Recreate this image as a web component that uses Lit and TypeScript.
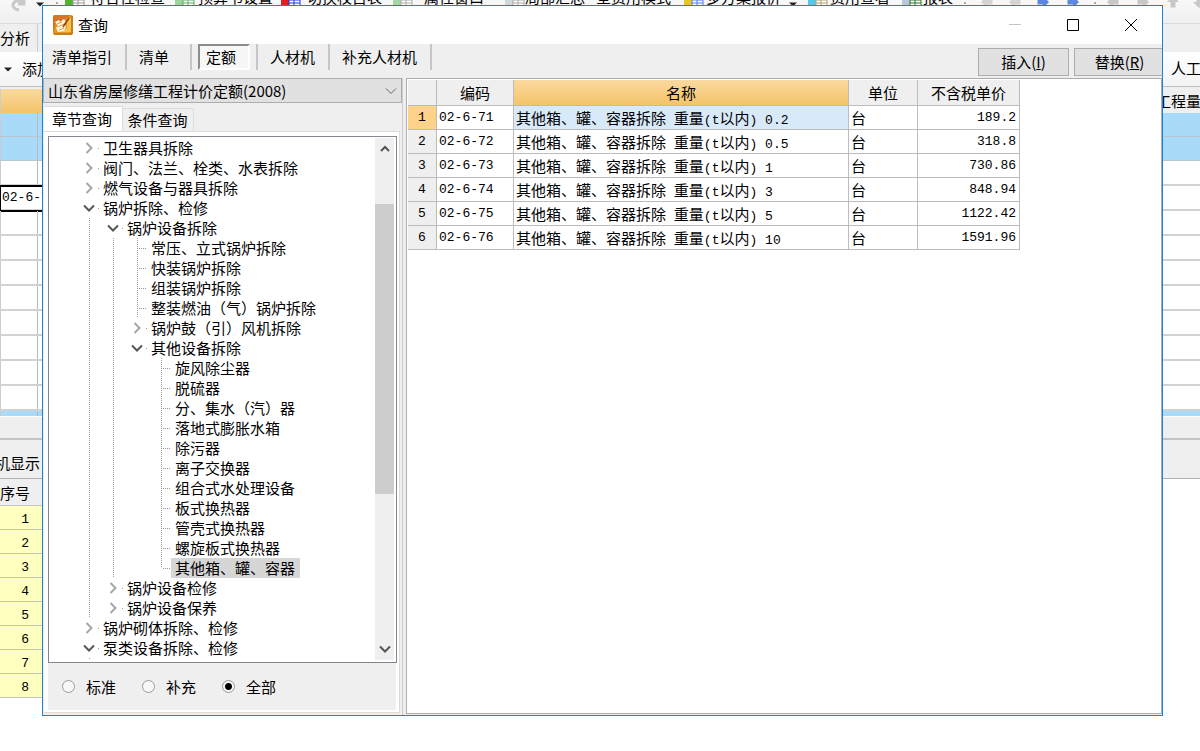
import { LitElement, html, css, svg } from "lit";
import { customElement, state } from "lit/decorators.js";
import { classMap } from "lit/directives/class-map.js";

type Kind = "open" | "closed" | "leaf" | "last";
interface Node { guides: string; kind: Kind; text: string }

const n = (guides: string, kind: Kind, text: string): Node => ({ guides, kind, text });

// Each character of `guides` is one indent step: "|" draws a connector, "." leaves it blank.
const NODES: Node[] = [
  n("", "closed", "卫生器具拆除"),
  n("", "closed", "阀门、法兰、栓类、水表拆除"),
  n("", "closed", "燃气设备与器具拆除"),
  n("", "open", "锅炉拆除、检修"),
  n("|", "open", "锅炉设备拆除"),
  n("||", "leaf", "常压、立式锅炉拆除"),
  n("||", "leaf", "快装锅炉拆除"),
  n("||", "leaf", "组装锅炉拆除"),
  n("||", "leaf", "整装燃油（气）锅炉拆除"),
  n("||", "closed", "锅炉鼓（引）风机拆除"),
  n("||", "open", "其他设备拆除"),
  n("||.", "leaf", "旋风除尘器"),
  n("||.", "leaf", "脱硫器"),
  n("||.", "leaf", "分、集水（汽）器"),
  n("||.", "leaf", "落地式膨胀水箱"),
  n("||.", "leaf", "除污器"),
  n("||.", "leaf", "离子交换器"),
  n("||.", "leaf", "组合式水处理设备"),
  n("||.", "leaf", "板式换热器"),
  n("||.", "leaf", "管壳式换热器"),
  n("||.", "leaf", "螺旋板式换热器"),
  n("||.", "last", "其他箱、罐、容器"),
  n("|", "closed", "锅炉设备检修"),
  n("|", "closed", "锅炉设备保养"),
  n("", "closed", "锅炉砌体拆除、检修"),
  n("", "open", "泵类设备拆除、检修"),
  n("|", "closed", "泵本设备拆除"),
];

const ROWS = [
  ["02-6-71", "0.2", "189.2"],
  ["02-6-72", "0.5", "318.8"],
  ["02-6-73", "1", "730.86"],
  ["02-6-74", "3", "848.94"],
  ["02-6-75", "5", "1122.42"],
  ["02-6-76", "10", "1591.96"],
];

const chevron = (dir: "right" | "down" | "up") => {
  const d = { right: "M3.5 1L8.5 6L3.5 11", down: "M1 3.5L6 8.5L11 3.5", up: "M2 8L6 4L10 8" }[dir];
  return html`<svg class="chev chev-${dir}" width="12" height="12" viewBox="0 0 12 12"><path d=${d} /></svg>`;
};

const caret = html`<svg width="8" height="5" viewBox="0 0 8 5"><path d="M0 0.5h8L4 4.5z" fill="#222" /></svg>`;

const arrow = (turn: number, color: string) => html`<svg class="tool" width="14" height="12" viewBox="0 0 14 12">
  <path transform="rotate(${turn} 7 6)" d="M7 0L13 6H9.5V11.5H4.5V6H1z" fill=${color} /></svg>`;

const sheet = (a: string, b: string) => html`<svg class="tool" width="20" height="12" viewBox="0 0 20 12">
  ${svg`<path d="M0 0h8v11H0z" fill=${a} /><path d="M8 .5h11v10H8zM8 4h11M8 7h11M13 0v10" fill="#fff" stroke=${b} />`}</svg>`;

@customElement("app-root")
export class AppRoot extends LitElement {
  @state() private selectedNode = 21;
  @state() private selectedRow = 0;

  static styles = css`
    :host {
      display: block;
      position: relative;
      height: 100vh;
      overflow: hidden;
      background: #fff;
      color: #000;
      font: 15px/20px "Noto Sans CJK SC", sans-serif;
    }
    * { box-sizing: border-box; }
    button, select, input { font: inherit; color: inherit; margin: 0; }
    button { border: 0; padding: 0; background: none; white-space: nowrap; }
    .mono { font-family: "Liberation Mono", "Noto Sans CJK SC", monospace; font-size: 13px; }

    /* Main window behind the dialog */
    .back { display: flex; flex-direction: column; white-space: nowrap; }
    .toolbar {
      display: grid;
      grid-template-columns:
        36px 20px 9px 25px 85px 23px 83px 26px 86px 31px 81px 20px 71px 88px 22px 83px
        19px 22px 72px 21px 41px 16px 28px 28px 30px 28px 12px 30px 30px 26px 1fr;
      height: 24px;
      overflow: hidden;
      background: linear-gradient(#f8f8f8, #efefef);
      border-bottom: 1px solid #dcdcdc;
    }
    .toolbar > * { margin-top: -13px; }
    .toolbar > svg { margin-top: 2px; }
    .toolbar > svg.tool { margin-top: -4px; }
    .toolbar > svg.undo { margin: 0 0 0 10px; }
    .dots { border-left: 2px dotted #aaa; height: 20px; }
    .band { display: flex; justify-content: space-between; overflow: hidden; }
    .left { width: 42px; flex: none; overflow: hidden; }
    .right { width: 44px; flex: none; overflow: hidden; }
    .tabs-back { height: 28px; background: #efefef; line-height: 28px; }
    .tabs-back .left { width: 38px; border-right: 1px solid #ccc; }
    .bar { height: 34px; line-height: 32px; background: linear-gradient(#fff, #f3f3f3); }
    .bar .left { display: flex; align-items: center; gap: 10px; padding-left: 4px; }
    .bar .left svg { flex: none; }
    .bar .right { width: 29px; }
    .heads { height: 27px; padding-top: 2px; line-height: 24px; background: #efefef; border-top: 1px solid #c0c0c0; }
    .heads .left { background: linear-gradient(#fad9a0, #f4c468); border-left: 1px solid #ccc; }
    .line { height: 25px; border-bottom: 2px solid #d2d2d2; }
    .line .left { border-left: 1px solid #ccc; }
    .line .left::after { content: ""; display: block; height: 100%; width: 36px; border-right: 1px solid #bbb; }
    .line.blue { height: 24px; background: #a8dafa; border-bottom: 1px solid #b9c6ce; }
    .line.thin { height: 5px; border: 0; }
    .line.active { overflow: visible; }
    .line.active .left { height: 27px; margin-top: -1px; border: solid #000; border-width: 2px 0 2px 1px; padding-left: 1px; line-height: 22px; }
    .line.active .left::after { content: none; }
    .scroll-back { height: 24px; background: #efefef; border-top: 1px solid #fff; border-bottom: 2px solid #c4c4c4; }
    .title-back { height: 39px; background: #efefef; border-bottom: 1px solid #b0b0b8; line-height: 46px; }
    .title-back .left { display: flex; justify-content: flex-end; padding-right: 2px; }
    .num { width: 42px; height: 24px; padding-right: 13px; background: #ffffc0; border-bottom: 1px solid #c4c4c4; text-align: right; line-height: 27px; }
    .num.head { height: 27px; background: #efefef; }

    /* Dialog */
    .dialog {
      position: absolute;
      inset: 5px 37px 35px 42px;
      display: flex;
      flex-direction: column;
      overflow: hidden;
      border: 1px solid #1883d7;
      background: #efefef;
    }
    .title { display: flex; align-items: center; gap: 5px; height: 38px; flex: none; padding-left: 10px; background: #fff; }
    .title h1 { flex: 1; margin: 0; font-size: 15px; font-weight: 400; line-height: 20px; }
    .sys { display: flex; gap: 12px; padding-right: 8px; }
    .sys button { display: grid; place-items: center; width: 46px; height: 36px; }
    .tabs { display: flex; height: 34px; flex: none; padding-left: 2px; }
    .tab { height: 26px; padding: 0 13px 0 12px; border-right: 2px solid #c6c6c6; }
    .tab.first { padding-left: 7px; }
    .tab.wide { padding-right: 21px; }
    .tab.on { width: 52px; margin: 0 6px; padding: 0 0 0 6px; border: 2px solid; border-color: #8c8c8c #fff #fff #8c8c8c; background: #f7f7f7; text-align: left; line-height: 22px; }
    .rule { width: 2px; height: 26px; background: #c6c6c6; }
    .actions { display: flex; gap: 5px; margin-left: auto; margin-right: -3px; padding-top: 4px; }
    .actions button { width: 91px; height: 28px; border: 1px solid #adadad; background: #e1e1e1; }

    .main { display: flex; flex: 1; min-height: 0; }
    .side { display: flex; flex-direction: column; width: 360px; flex: none; border-right: 1px solid #ccc; }
    .pick { position: relative; flex: none; width: 359px; height: 25px; }
    .pick select { appearance: none; width: 100%; height: 100%; padding: 0 24px 0 4px; border: 1px solid #adadad; border-radius: 0; background: #e1e1e1; line-height: 20px; }
    .sub { display: flex; align-items: flex-end; flex: none; height: 28px; padding-left: 1px; }
    .sub button { height: 23px; padding: 0 5px 0 4px; border: 1px solid #dcdcdc; border-width: 1px 1px 0 0; width: 71px; }
    .sub button.on { width: 79px; height: 25px; padding: 0 10px 0 8px; background: #fff; line-height: 22px; }
    .page { display: flex; flex-direction: column; flex: 1; min-height: 0; margin: 0 2px 2px 1px; padding: 4px 2px 2px 4px; background: #fff; border: 1px solid #dcdcdc; border-width: 1px 1px 1px 0; }
    .treebox { display: flex; flex: 1; min-height: 0; border: 1px solid #828790; padding: 1px 2px 2px 0; background: #fff; }
    .tree { flex: 1; margin: 0; padding: 0 0 0 26px; overflow: hidden; list-style: none; }
    .tree li { display: flex; height: 20px; white-space: nowrap; }
    .step { width: 24px; flex: none; }
    .step.v { background: repeating-linear-gradient(#999 0 1px, transparent 1px 2px) 14px 0 / 1px 100% no-repeat; }
    .leaf, .last { background:
        repeating-linear-gradient(#999 0 1px, transparent 1px 2px) 14px 0 / 1px 100% no-repeat,
        repeating-linear-gradient(90deg, #999 0 1px, transparent 1px 2px) 16px 10px / 8px 1px no-repeat; }
    .last { background-size: 1px 10px, 8px 1px; }
    .node { display: grid; place-items: center start; padding-left: 8px; background: linear-gradient(#999, #999) 23px 10px / 1px 1px no-repeat; }
    .label { padding: 0 5px 0 4px; line-height: 19px; height: 20px; }
    .label.on { background: #d6d6d6; }
    .chev { fill: none; stroke: #555; stroke-width: 2; }
    .chev-right { stroke: #a6a6a6; }
    .pick .chev { position: absolute; right: 5px; top: 7px; pointer-events: none; stroke: #666; stroke-width: 1; }
    .scroll { display: grid; grid-template-rows: 66fr 291fr 166fr; width: 19px; flex: none; justify-items: center; background: #efefef; }
    .scroll .chev { margin: 5px 0; }
    .scroll .chev:last-child { align-self: end; }
    .thumb { width: 100%; background: #cdcdcd; }
    .radios { display: flex; align-items: center; height: 47px; flex: none; margin-right: 1px; padding: 0 14px; background: #efefef; }
    .radios label { display: flex; align-items: center; gap: 11px; width: 80px; }
    .radios input { appearance: none; width: 13px; height: 13px; border: 1px solid #999; border-radius: 50%; background: #f8f8f8; }
    .radios input:checked { background: radial-gradient(circle, #000 0 3px, #f8f8f8 4px); }

    .data { flex: 1; min-width: 0; margin: 0 0 1px 3px; padding: 1px 0 0 1px; border: 1px solid #a9adb5; background: #fff; }
    table { width: 612px; table-layout: fixed; border-collapse: separate; border-spacing: 0; }
    th, td { height: 24px; padding: 0 2px; border: 0 solid #bcbcbc; border-width: 0 1px 1px 0; font-weight: 400; line-height: 20px; overflow: hidden; white-space: nowrap; text-align: left; }
    td .mono { line-height: 1; }
    thead th { height: 26px; background: #efefef; text-align: center; }
    thead .hot { background: linear-gradient(#fad9a0, #f4c468); }
    tbody th { background: #efefef; text-align: center; }
    tbody .on th { background: #ffd28a; }
    tbody .on .name { background: #d8eaf9; }
    td.price { padding-right: 3px; text-align: right; }
    .c-num { width: 29px; } .c-code { width: 77px; } .c-unit { width: 69px; } .c-price { width: 102px; }
  `;

  private backWindow() {
    return html`<div class="back">
      <div class="toolbar">
        <svg class="undo" width="17" height="12" viewBox="0 0 17 12"><path d="M9 10C-1 9 2-3 14 2M14-2V4H8" fill="none" stroke="#c8c8c8" stroke-width="3" /></svg>
        ${caret}<i class="dots"></i>
        ${sheet("#4fb52c", "#999")}<span>符合性检查</span>
        ${sheet("#9ad69a", "#5fae5f")}<span>预算书设置</span>
        ${sheet("#e02020", "#1838d8")}<span>切换校目表</span>
        ${sheet("#a5d8a0", "#aaa")}<span>属性窗口</span>
        ${sheet("#d0d8dc", "#aaa")}<span>局部汇总</span><span>全费用模式</span>
        ${sheet("#e8c820", "#4a80e0")}<span>多方案报价</span>${caret}
        ${sheet("#52c8ec", "#b0a070")}<span>费用查看</span>
        ${sheet("#b8c8d8", "#287828")}<span>报表</span><i class="dots"></i>
        ${arrow(-90, "#d4d4d4")}${arrow(-90, "#d4d4d4")}${arrow(90, "#5a88e0")}${arrow(90, "#5a88e0")}<i class="dots"></i>
        ${arrow(-90, "#c8c8c8")}${arrow(90, "#c8c8c8")}${arrow(0, "#c8c8c8")}${arrow(180, "#c8c8c8")}
      </div>
      <div class="band tabs-back"><div class="left">分析</div></div>
      <div class="band bar"><div class="left">${caret}<span>添加</span></div><div class="right">人工</div></div>
      <div class="band heads"><div class="left"></div><div class="right">工程量表达式</div></div>
      <div class="band line blue"><div class="left"></div></div>
      <div class="band line blue"><div class="left"></div></div>
      <div class="band line"><div class="left"></div></div>
      <div class="band line active"><div class="left mono">02-6-76</div></div>
      ${Array.from({ length: 8 }, () => html`<div class="band line"><div class="left"></div></div>`)}
      <div class="band line blue thin"><div class="left"></div></div>
      <div class="scroll-back"></div>
      <div class="band title-back"><div class="left">工料机显示</div></div>
      <div class="num head">序号</div>
      ${[1, 2, 3, 4, 5, 6, 7, 8].map((i) => html`<div class="num mono">${i}</div>`)}
    </div>`;
  }

  private treeRow(node: Node, i: number) {
    const branch = node.kind === "open" || node.kind === "closed";
    return html`<li role="treeitem" aria-selected=${i === this.selectedNode}>
      ${[...node.guides].map((g) => html`<span class="step ${g === "|" ? "v" : ""}"></span>`)}
      <span class="step ${branch ? "node" : node.kind}">${branch ? chevron(node.kind === "open" ? "down" : "right") : ""}</span>
      <span class=${classMap({ label: true, on: i === this.selectedNode })} @click=${() => (this.selectedNode = i)}>${node.text}</span>
    </li>`;
  }

  render() {
    return html`
      ${this.backWindow()}
      <section class="dialog" role="dialog" aria-label="查询">
        <header class="title">
          <svg width="20" height="20" viewBox="0 0 20 20">
            <rect width="20" height="20" rx="2" fill="#e09a20" />
            <path d="M0 2Q0 0 2 0H18L13 4L3 8L0 18z" fill="#d8742a" />
            <path d="M14 3h4v14H6l8-4z" fill="#f7c24c" />
            <path d="M2 7L6 5L7 7L11 4L13 7L11 9L13 11L11 16L5 17L3 13L5 11z" fill="#fff6dc" />
            <path d="M4 9l5-2M5 12l6-3M6 15l5-2" stroke="#d59a58" />
            <path d="M16 3L10 12" stroke="#9a3c10" stroke-width="1.5" />
            <path d="M1 19H19V1" fill="none" stroke="#b5640c" />
          </svg>
          <h1>查询</h1>
          <div class="sys">
            <button aria-label="最小化"><svg width="12" height="12"><path d="M0 5.5h12" stroke="#c4c4c4" /></svg></button>
            <button aria-label="最大化"><svg width="12" height="12"><path d="M.5.5h11v11H.5z" fill="none" stroke="#000" /></svg></button>
            <button aria-label="关闭"><svg width="12" height="12"><path d="M0 0L12 12M12 0L0 12" stroke="#000" /></svg></button>
          </div>
        </header>
        <nav class="tabs">
          <button class="tab first">清单指引</button>
          <button class="tab wide">清单</button>
          <button class="tab on">定额</button>
          <i class="rule"></i>
          <button class="tab">人材机</button>
          <button class="tab">补充人材机</button>
          <div class="actions">
            <button>插入(<u>I</u>)</button>
            <button>替换(<u>R</u>)</button>
          </div>
        </nav>
        <div class="main">
          <div class="side">
            <div class="pick">
              <select aria-label="定额库"><option>山东省房屋修缮工程计价定额(2008)</option></select>
              ${chevron("down")}
            </div>
            <div class="sub"><button class="on">章节查询</button><button>条件查询</button></div>
            <div class="page">
              <div class="treebox">
                <ul class="tree" role="tree">${NODES.map((x, i) => this.treeRow(x, i))}</ul>
                <div class="scroll">${chevron("up")}<div class="thumb"></div>${chevron("down")}</div>
              </div>
              <div class="radios">
                ${["标准", "补充", "全部"].map((t) => html`<label><input type="radio" name="scope" .checked=${t === "全部"} />${t}</label>`)}
              </div>
            </div>
          </div>
          <div class="data">
            <table>
              <colgroup><col class="c-num" /><col class="c-code" /><col /><col class="c-unit" /><col class="c-price" /></colgroup>
              <thead><tr><th></th><th>编码</th><th class="hot">名称</th><th>单位</th><th>不含税单价</th></tr></thead>
              <tbody>
                ${ROWS.map(([code, weight, price], i) => html`
                  <tr class=${classMap({ on: i === this.selectedRow })} @click=${() => (this.selectedRow = i)}>
                    <th class="mono">${i + 1}</th>
                    <td class="mono">${code}</td>
                    <td class="name">其他箱、罐、容器拆除<span class="mono"> </span>重量<span class="mono">(t</span>以内<span class="mono">) ${weight}</span></td>
                    <td>台</td>
                    <td class="mono price">${price}</td>
                  </tr>`)}
              </tbody>
            </table>
          </div>
        </div>
      </section>`;
  }
}
